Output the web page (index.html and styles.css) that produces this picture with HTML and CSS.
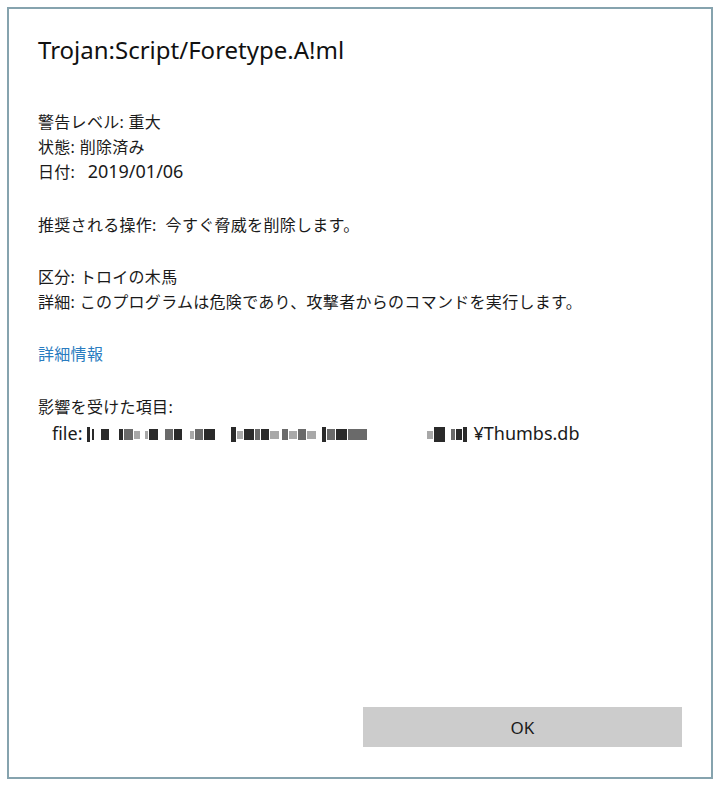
FILE: index.html
```html
<!DOCTYPE html>
<html>
<head>
  <meta name="viewport" content="width=device-width, initial-scale=1">
  <link rel="stylesheet" href="styles.css">
</head>
<body>

  <div class="dialog">
    <div class="content">
      <h1>Trojan:Script/Foretype.A!ml</h1>

      <div class="group">
        <p class="line">警告レベル: 重大</p>
        <p class="line">状態: 削除済み</p>
        <p class="line">日付: <span class="latin date">2019/01/06</span></p>
      </div>

      <div class="group">
        <p class="line">推奨される操作:&nbsp; 今すぐ脅威を削除します。</p>
      </div>

      <div class="group">
        <p class="line">区分: トロイの木馬</p>
        <p class="line">詳細: このプログラムは危険であり、攻撃者からのコマンドを実行します。</p>
      </div>

      <div class="group">
        <a class="link" href="#">詳細情報</a>
      </div>

      <div class="group">
        <p class="line">影響を受けた項目:</p>
        <p class="line file"><span class="latin">file:</span><span class="blur">
          <i class="b dark tall w3"></i><i class="b dark w2 g2"></i>
          <i class="b dark w7 g7"></i>
          <i class="b dark w4 g10"></i><i class="b mid w8"></i><i class="b light w6"></i>
          <i class="b light w3 g5"></i><i class="b dark w8"></i>
          <i class="b mid w7 g7"></i><i class="b dark w7"></i>
          <i class="b light w4 g8"></i><i class="b mid w7"></i><i class="b dark w11"></i>
          <i class="b dark tall w5 g16"></i><i class="b light w6"></i><i class="b dark w10"></i><i class="b mid w5"></i><i class="b dark w7"></i><i class="b light w8"></i>
          <i class="b mid w6 g3"></i><i class="b light w7"></i><i class="b mid w7"></i><i class="b light w8"></i>
          <i class="b dark tall w4 g6"></i><i class="b mid w7"></i><i class="b dark w11"></i><i class="b mid w19"></i>
          <i class="b light w6 g60"></i><i class="b dark tall w11"></i>
          <i class="b mid w4 g6"></i><i class="b dark w6"></i><i class="b dark tall w4"></i>
        </span><span class="latin">¥Thumbs.db</span></p>
      </div>
    </div>

    <div class="footer">
      <button class="okButton" type="button">OK</button>
    </div>
  </div>

</body>
</html>
```

FILE: styles.css
```css
html {
  background-color: #ffffff;
}
body {
  margin: 0;
  padding: 7px;
  height: 787px;
  box-sizing: border-box;
  font-family: "Noto Sans", "Noto Sans CJK JP", sans-serif;
  color: #1a1a1a;
}

.dialog {
  height: 772px;
  width: 706px;
  box-sizing: border-box;
  border: 2px solid #86a3ae;
  background-color: #ffffff;
  display: flex;
  flex-direction: column;
}

.content {
  flex: 1;
  padding: 25px 29px 0 29px;
}

h1 {
  margin: 0;
  font-size: 24px;
  font-weight: normal;
  line-height: 32px;
  color: #111111;
}

.group {
  margin-top: 28px;
}
.group:first-of-type {
  margin-top: 44px;
}

.line {
  margin: 0;
  font-size: 16px;
  line-height: 24.5px;
  letter-spacing: 0.3px;
}

.latin {
  font-size: 18px;
  letter-spacing: 0;
}
.date {
  margin-left: 8px;
}

.file {
  padding-left: 14px;
  margin-top: 2px;
}

.link {
  font-size: 16px;
  line-height: 24.5px;
  letter-spacing: 0.3px;
  color: #2a7cc0;
  text-decoration: none;
}

/* pixelated path */
.blur {
  display: inline-flex;
  align-items: center;
  height: 16px;
  margin: 0 6px 0 4px;
  vertical-align: -2px;
  filter: blur(0.5px);
}
.b {
  display: inline-block;
  height: 11px;
  margin-left: 1px;
}
.b.tall { height: 15px; }
.b.dark { background-color: #2a2a2a; }
.b.mid { background-color: #6a6a6a; }
.b.light { background-color: #a8a8a8; height: 8px; }

.w2 { width: 2px; }
.w3 { width: 3px; }
.w4 { width: 4px; }
.w5 { width: 5px; }
.w6 { width: 6px; }
.w7 { width: 8px; }
.w8 { width: 9px; }
.w10 { width: 10px; }
.w11 { width: 11px; }
.w19 { width: 19px; }

.g2 { margin-left: 2px; }
.g3 { margin-left: 3px; }
.g5 { margin-left: 5px; }
.g6 { margin-left: 6px; }
.g7 { margin-left: 7px; }
.g8 { margin-left: 8px; }
.g10 { margin-left: 10px; }
.g16 { margin-left: 16px; }
.g60 { margin-left: 60px; }

.footer {
  display: flex;
  justify-content: flex-end;
  padding: 0 29px 30px 0;
}

.okButton {
  width: 319px;
  height: 40px;
  border: none;
  background-color: #cccccc;
  font-family: "Noto Sans", sans-serif;
  font-size: 17px;
  color: #1a1a1a;
}
```
